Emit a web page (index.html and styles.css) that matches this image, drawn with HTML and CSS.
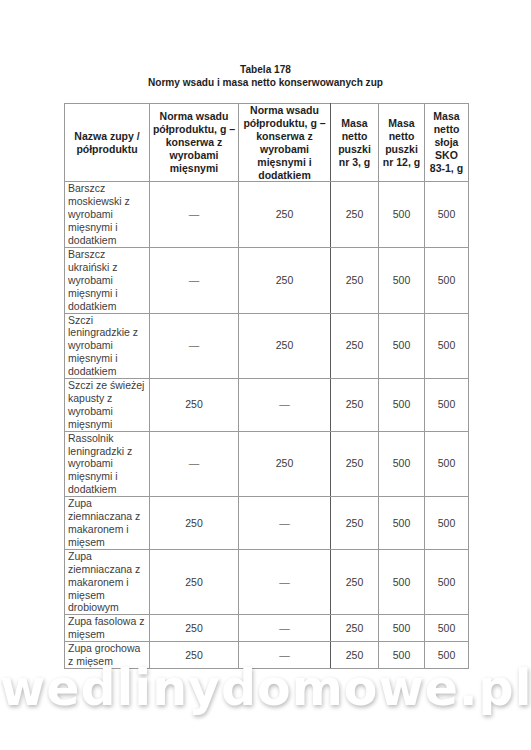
FILE: index.html
```html
<!DOCTYPE html>
<html lang="pl">
<head>
<meta charset="utf-8">
<title>Tabela 178</title>
<link rel="stylesheet" href="styles.css">
</head>
<body>
<div class="page">
  <div class="caption">
    <div>Tabela 178</div>
    <div>Normy wsadu i masa netto konserwowanych zup</div>
  </div>
  <table class="norms">
    <colgroup>
      <col class="c1"><col class="c2"><col class="c3"><col class="c4"><col class="c5"><col class="c6">
    </colgroup>
    <thead>
      <tr>
        <th>Nazwa zupy /<br>półproduktu</th>
        <th>Norma wsadu<br>półproduktu, g –<br>konserwa z<br>wyrobami<br>mięsnymi</th>
        <th class="dark">Norma wsadu<br>półproduktu, g –<br>konserwa z<br>wyrobami<br>mięsnymi i<br>dodatkiem</th>
        <th>Masa<br>netto<br>puszki<br>nr 3, g</th>
        <th>Masa<br>netto<br>puszki<br>nr 12, g</th>
        <th>Masa<br>netto<br>słoja<br>SKO<br>83-1, g</th>
      </tr>
    </thead>
    <tbody>
      <tr>
        <td class="name">Barszcz<br>moskiewski z<br>wyrobami<br>mięsnymi i<br>dodatkiem</td>
        <td class="dash">—</td><td class="dark">250</td><td>250</td><td>500</td><td>500</td>
      </tr>
      <tr>
        <td class="name">Barszcz<br>ukraiński z<br>wyrobami<br>mięsnymi i<br>dodatkiem</td>
        <td class="dash">—</td><td class="dark">250</td><td>250</td><td>500</td><td>500</td>
      </tr>
      <tr>
        <td class="name">Szczi<br>leningradzkie z<br>wyrobami<br>mięsnymi i<br>dodatkiem</td>
        <td class="dash">—</td><td class="dark">250</td><td>250</td><td>500</td><td>500</td>
      </tr>
      <tr>
        <td class="name">Szczi ze świeżej<br>kapusty z<br>wyrobami<br>mięsnymi</td>
        <td>250</td><td class="dark dash">—</td><td>250</td><td>500</td><td>500</td>
      </tr>
      <tr>
        <td class="name">Rassolnik<br>leningradzki z<br>wyrobami<br>mięsnymi i<br>dodatkiem</td>
        <td class="dash">—</td><td class="dark">250</td><td>250</td><td>500</td><td>500</td>
      </tr>
      <tr>
        <td class="name">Zupa<br>ziemniaczana z<br>makaronem i<br>mięsem</td>
        <td>250</td><td class="dark dash">—</td><td>250</td><td>500</td><td>500</td>
      </tr>
      <tr>
        <td class="name">Zupa<br>ziemniaczana z<br>makaronem i<br>mięsem<br>drobiowym</td>
        <td>250</td><td class="dark dash">—</td><td>250</td><td>500</td><td>500</td>
      </tr>
      <tr>
        <td class="name">Zupa fasolowa z<br>mięsem</td>
        <td>250</td><td class="dark dash">—</td><td>250</td><td>500</td><td>500</td>
      </tr>
      <tr>
        <td class="name">Zupa grochowa<br>z mięsem</td>
        <td>250</td><td class="dark dash">—</td><td>250</td><td>500</td><td>500</td>
      </tr>
    </tbody>
  </table>
  <div class="watermark">wedlinydomowe.pl</div>
</div>
</body>
</html>
```
FILE: styles.css
```css
html, body {
  margin: 0;
  padding: 0;
  background: #ffffff;
}
body {
  font-family: "Liberation Sans", Arial, sans-serif;
  color: #2b2b2b;
}
.page {
  position: relative;
  width: 531px;
  height: 750px;
  overflow: hidden;
  padding-top: 63px;
  box-sizing: border-box;
}
.caption {
  text-align: center;
  font-weight: bold;
  font-size: 10.1px;
  line-height: 13px;
  color: #1e1e1e;
  margin-bottom: 14px;
}
.norms {
  margin-left: 64px;
  width: 404px;
  border-collapse: collapse;
  table-layout: fixed;
  font-size: 10.5px;
  line-height: 12.9px;
}
.c1 { width: 85px; }
.c2 { width: 89px; }
.c3 { width: 92px; }
.c4 { width: 48px; }
.c5 { width: 46px; }
.c6 { width: 44px; }
.norms th,
.norms td {
  border: 1px solid #9a9a9a;
  padding: 0 2px;
  text-align: center;
  vertical-align: middle;
  color: #3a3a3a;
}
.norms th {
  font-weight: bold;
  color: #1e1e1e;
}
.norms td.name {
  text-align: left;
  padding-left: 3px;
  color: #3c3c3c;
}
.norms .dark {
  border-right-color: #5a5a5a;
}
.norms td.dash {
  color: #6a6a6a;
}
.watermark {
  position: absolute;
  left: 0;
  top: 674px;
  width: 531px;
  text-align: center;
  font-family: "DejaVu Sans", sans-serif;
  font-weight: bold;
  font-size: 49px;
  line-height: 30px;
  color: #ffffff;
  text-shadow: 1px 2px 4px rgba(0, 0, 0, 0.28);
  letter-spacing: 1px;
}
```
